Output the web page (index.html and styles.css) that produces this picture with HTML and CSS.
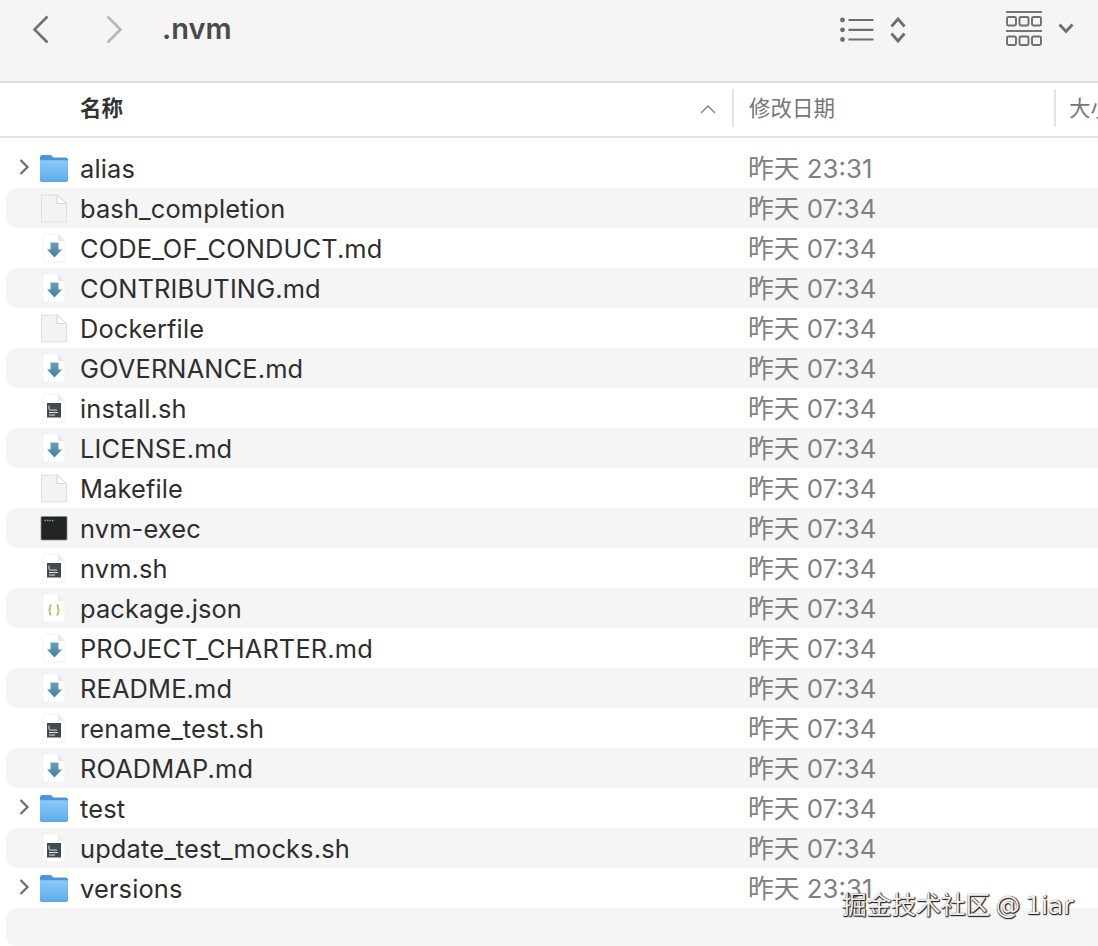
FILE: index.html
```html
<!DOCTYPE html>
<html lang="zh">
<head>
<meta charset="utf-8">
<title>.nvm</title>
<link rel="stylesheet" href="styles.css">
</head>
<body>
<svg class="defs" width="0" height="0" aria-hidden="true">
  <defs>
    <linearGradient id="fg" x1="0" y1="0" x2="0" y2="1"><stop offset="0" stop-color="#8ccaf8"/><stop offset="1" stop-color="#5fa9e6"/></linearGradient>
    <linearGradient id="ag" x1="0" y1="0" x2="0" y2="1"><stop offset="0" stop-color="#6a9fb8"/><stop offset="1" stop-color="#3f7f9e"/></linearGradient>
    <symbol id="i-folder" viewBox="0 0 30 30">
      <path d="M1 4.500C1 2.800 2 2 3.400 2h7.400c1 0 1.500.3 2.200 1l1.300 1.500h12.300c1.500 0 2.400 1 2.400 2.400V26.500c0 1.500-1 2.500-2.400 2.500H3.400C2 29 1 28 1 26.500z" fill="#4a94d8"/>
      <path d="M1 8.500c0-.8.600-1.300 1.300-1.300h25.400c.7 0 1.300.5 1.300 1.300V26.500c0 1.500-1 2.500-2.400 2.500H3.400C2 29 1 28 1 26.500z" fill="url(#fg)"/>
    </symbol>
    <symbol id="i-doc" viewBox="0 0 30 30">
      <path d="M2.500 2h15.500l9.500 8.500v18.500h-25z" fill="#f3f3f3" stroke="#dcdcdc" stroke-width=".9"/>
      <path d="M18 2v8.500h9.500z" fill="#fff" stroke="#d0d0d0" stroke-width=".9"/>
    </symbol>
    <symbol id="i-md" viewBox="0 0 30 30">
      <path d="M4 1h15l7 7v21H4z" fill="#fff" stroke="#eeeeee" stroke-width=".7"/>
      <path d="M19 1v7h7z" fill="#ece6ef"/>
      <path d="M11.500 9.500h8v7h3.500l-7.500 8-7.500-8h3.500z" fill="url(#ag)"/>
    </symbol>
    <symbol id="i-sh" viewBox="0 0 30 30">
      <path d="M4 1h15l7 7v21H4z" fill="#fff" stroke="#eeeeee" stroke-width=".7"/>
      <path d="M19 1v7h7z" fill="#ececec"/>
      <rect x="8" y="10" width="14" height="14.500" fill="#414a50"/>
      <path d="M10 12.500v4M10 17h8M10 19.500h9M10 22h6" stroke="#dfe3e5" stroke-width="1" fill="none"/>
    </symbol>
    <symbol id="i-json" viewBox="0 0 30 30">
      <path d="M4 1h15l7 7v21H4z" fill="#fff" stroke="#eeeeee" stroke-width=".7"/>
      <path d="M19 1v7h7z" fill="#ececec"/>
      <path d="M12.500 12c-2 0-1.500 1-1.500 2.500 0 1.500-.5 2.500-1.500 2.500 1 0 1.500 1 1.500 2.500 0 1.500-.5 2.500 1.500 2.500M17.500 12c2 0 1.500 1 1.500 2.500 0 1.500.5 2.500 1.500 2.500-1 0-1.500 1-1.500 2.500 0 1.500.5 2.500-1.500 2.500" fill="none" stroke="#a3be55" stroke-width="1.500"/>
    </symbol>
    <symbol id="i-exec" viewBox="0 0 30 30">
      <rect x="2" y="3.500" width="26" height="23.500" rx="1" fill="#222523" stroke="#8b8b8b" stroke-width=".7"/>
      <path d="M5.500 7.500h1.500M8 7.500h1.500M10.500 7.500h1.500M13 7.500h1.500" stroke="#76bb63" stroke-width="1.600"/>
    </symbol>
    <symbol id="i-caret" viewBox="0 0 12 18">
      <path d="M2.500 2l7 7-7 7" fill="none" stroke="#6e6e6e" stroke-width="2.200"/>
    </symbol>
  </defs>
</svg>

<header class="toolbar">
  <svg class="nav-back" width="20" height="32" viewBox="0 0 20 32"><path d="M16.500 2.500L3.500 15.500l13 13" fill="none" stroke="#6f6f6f" stroke-width="2.600"/></svg>
  <svg class="nav-forward" width="20" height="32" viewBox="0 0 20 32"><path d="M3.500 2.500l13 13-13 13" fill="none" stroke="#b7b7b7" stroke-width="2.600"/></svg>
  <h1 class="title">.nvm</h1>
  <div class="tool-list">
    <svg width="66" height="28" viewBox="0 0 66 28" class="tool-svg">
      <g fill="#6e6e6e"><circle cx="2.500" cy="4" r="2.400"/><circle cx="2.500" cy="13.800" r="2.400"/><circle cx="2.500" cy="23.500" r="2.400"/></g>
      <path d="M8.500 4h25M8.500 13.800h25M8.500 23.500h25" stroke="#6e6e6e" stroke-width="2.200"/>
      <path d="M51.500 10.500L58 3l6.500 7.500M51.500 17.500L58 25l6.500-7.500" fill="none" stroke="#6e6e6e" stroke-width="2.800"/>
    </svg>
  </div>
  <div class="tool-view">
    <svg width="37" height="35" viewBox="0 0 37 35" class="tool-svg">
      <path d="M0 1h36M0 20h36" stroke="#757575" stroke-width="2"/>
      <g fill="none" stroke="#6e6e6e" stroke-width="1.900">
        <rect x="1" y="6" width="9" height="8.500" rx="1.500"/><rect x="13.500" y="6" width="9" height="8.500" rx="1.500"/><rect x="26" y="6" width="9" height="8.500" rx="1.500"/>
        <rect x="1" y="25.500" width="9" height="8.500" rx="1.500"/><rect x="13.500" y="25.500" width="9" height="8.500" rx="1.500"/><rect x="26" y="25.500" width="9" height="8.500" rx="1.500"/>
      </g>
    </svg>
    <svg width="16" height="11" viewBox="0 0 16 11" class="tool-svg"><path d="M1.500 1.500L8 8.500l6.500-7" fill="none" stroke="#6e6e6e" stroke-width="2.800"/></svg>
  </div>
</header>

<div class="columns">
  <div class="col col-name">
    <span class="col-label">名称</span>
    <svg width="16" height="9" viewBox="0 0 16 9" class="sort"><path d="M1 8l7-7 7 7" fill="none" stroke="#8a8a8a" stroke-width="1.500"/></svg>
  </div>
  <div class="col col-date"><span>修改日期</span></div>
  <div class="col col-size"><span>大小</span></div>
</div>

<main class="list">
  <div class="row"><svg class="caret" width="12" height="18"><use href="#i-caret"/></svg><svg class="icon" width="30" height="30"><use href="#i-folder"/></svg><span class="name">alias</span><span class="date">昨天 23:31</span></div>
  <div class="row"><svg class="icon" width="30" height="30"><use href="#i-doc"/></svg><span class="name">bash_completion</span><span class="date">昨天 07:34</span></div>
  <div class="row"><svg class="icon" width="30" height="30"><use href="#i-md"/></svg><span class="name">CODE_OF_CONDUCT.md</span><span class="date">昨天 07:34</span></div>
  <div class="row"><svg class="icon" width="30" height="30"><use href="#i-md"/></svg><span class="name">CONTRIBUTING.md</span><span class="date">昨天 07:34</span></div>
  <div class="row"><svg class="icon" width="30" height="30"><use href="#i-doc"/></svg><span class="name">Dockerfile</span><span class="date">昨天 07:34</span></div>
  <div class="row"><svg class="icon" width="30" height="30"><use href="#i-md"/></svg><span class="name">GOVERNANCE.md</span><span class="date">昨天 07:34</span></div>
  <div class="row"><svg class="icon" width="30" height="30"><use href="#i-sh"/></svg><span class="name">install.sh</span><span class="date">昨天 07:34</span></div>
  <div class="row"><svg class="icon" width="30" height="30"><use href="#i-md"/></svg><span class="name">LICENSE.md</span><span class="date">昨天 07:34</span></div>
  <div class="row"><svg class="icon" width="30" height="30"><use href="#i-doc"/></svg><span class="name">Makefile</span><span class="date">昨天 07:34</span></div>
  <div class="row"><svg class="icon" width="30" height="30"><use href="#i-exec"/></svg><span class="name">nvm-exec</span><span class="date">昨天 07:34</span></div>
  <div class="row"><svg class="icon" width="30" height="30"><use href="#i-sh"/></svg><span class="name">nvm.sh</span><span class="date">昨天 07:34</span></div>
  <div class="row"><svg class="icon" width="30" height="30"><use href="#i-json"/></svg><span class="name">package.json</span><span class="date">昨天 07:34</span></div>
  <div class="row"><svg class="icon" width="30" height="30"><use href="#i-md"/></svg><span class="name">PROJECT_CHARTER.md</span><span class="date">昨天 07:34</span></div>
  <div class="row"><svg class="icon" width="30" height="30"><use href="#i-md"/></svg><span class="name">README.md</span><span class="date">昨天 07:34</span></div>
  <div class="row"><svg class="icon" width="30" height="30"><use href="#i-sh"/></svg><span class="name">rename_test.sh</span><span class="date">昨天 07:34</span></div>
  <div class="row"><svg class="icon" width="30" height="30"><use href="#i-md"/></svg><span class="name">ROADMAP.md</span><span class="date">昨天 07:34</span></div>
  <div class="row"><svg class="caret" width="12" height="18"><use href="#i-caret"/></svg><svg class="icon" width="30" height="30"><use href="#i-folder"/></svg><span class="name">test</span><span class="date">昨天 07:34</span></div>
  <div class="row"><svg class="icon" width="30" height="30"><use href="#i-sh"/></svg><span class="name">update_test_mocks.sh</span><span class="date">昨天 07:34</span></div>
  <div class="row"><svg class="caret" width="12" height="18"><use href="#i-caret"/></svg><svg class="icon" width="30" height="30"><use href="#i-folder"/></svg><span class="name">versions</span><span class="date">昨天 23:31</span></div>
  <div class="row row-empty"></div>
</main>

<div class="watermark">掘金技术社区 @ 1iar</div>
</body>
</html>
```

FILE: styles.css
```css
* { box-sizing: border-box; }
html, body { margin: 0; height: 100%; }
body {
  width: 1098px;
  height: 946px;
  overflow: hidden;
  background: #fff;
  position: relative;
  font-family: Inter, "Noto Sans CJK SC", sans-serif;
  color: #2e2e2e;
}
.defs { position: absolute; }

.toolbar {
  height: 83px;
  padding-right: 24px;
  background: #f5f5f5;
  border-bottom: 2px solid #dcdcdc;
  display: flex;
  align-items: flex-start;
}
.nav-back { margin: 14px 0 0 31px; }
.nav-forward { margin: 14px 0 0 53px; }
.title {
  margin: 11px 0 0 38px;
  font-size: 29px;
  line-height: 36px;
  font-weight: 600;
  color: #4a4a4a;
}
.tool-list { margin: 16px 0 0 auto; }
.tool-view { margin: 11px 0 0 100px; display: flex; align-items: center; gap: 15px; }
.tool-svg { display: block; }

.columns {
  height: 55px;
  display: flex;
  border-bottom: 2px solid #e2e2e2;
  font-size: 21.500px;
  color: #767676;
}
.col { display: flex; align-items: center; height: 38px; margin-top: 6px; padding-bottom: 3px; }
.col-name {
  width: 732px;
  padding-left: 80px;
  padding-right: 16px;
  justify-content: space-between;
  font-weight: 600;
  color: #333;
}
.sort { margin-top: 6px; }
.col-date {
  width: 322px;
  padding-left: 15px;
  border-left: 2px solid #e4e4e4;
}
.col-size {
  flex: 1;
  padding-left: 13px;
  border-left: 2px solid #e4e4e4;
  white-space: nowrap;
  overflow: hidden;
}

.list { padding-top: 10px; }
.row {
  height: 40px;
  position: relative;
  margin-left: 6px;
  padding-left: 33px;
  display: flex;
  align-items: center;
  font-size: 25.400px;
  letter-spacing: .15px;
  border-radius: 10px 0 0 10px;
}
.row:nth-child(even) { background: #f5f5f5; }
.caret { position: absolute; left: 12px; top: 10px; }
.icon { flex: none; width: 30px; height: 30px; }
.name { margin-left: 11px; width: 668px; white-space: nowrap; }
.date { color: #808080; white-space: nowrap; margin-bottom: 4px; font-size: 25.800px; letter-spacing: 0; }
.row-empty { height: 38px; }

.watermark {
  position: absolute;
  left: 842px;
  top: 891px;
  font-family: "DejaVu Sans", "Noto Sans CJK SC", sans-serif;
  font-size: 24.700px;
  line-height: 30px;
  word-spacing: -2.500px;
  color: #f0f0f0;
  white-space: nowrap;
  text-shadow: 0 1px 1px #222, 1px 0 1px #222, 1px 1px 1px #444;
}
```
